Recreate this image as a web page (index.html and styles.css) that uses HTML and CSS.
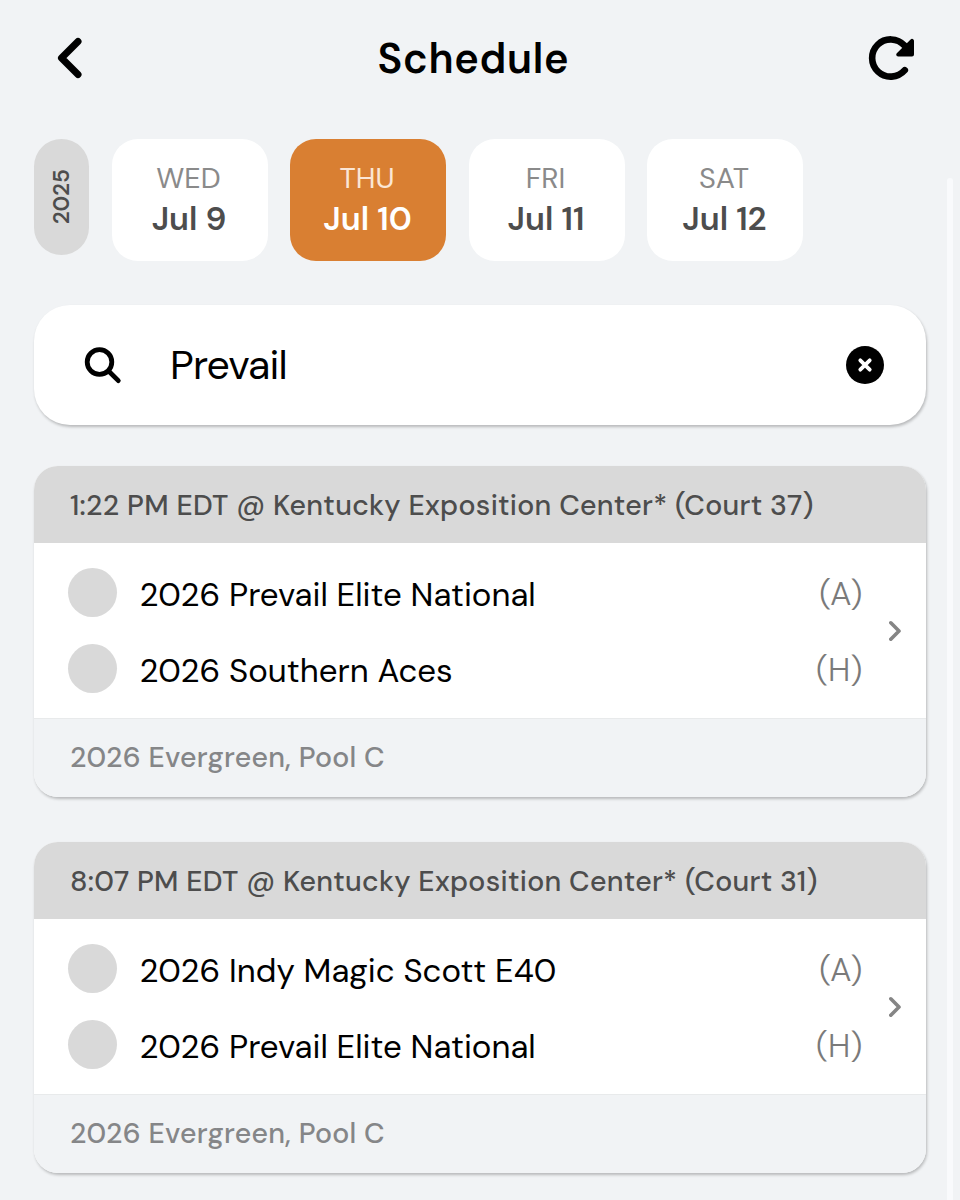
FILE: index.html
```
<!DOCTYPE html>
<html lang="en">
<head>
  <meta charset="UTF-8">
  <meta name="viewport" content="width=device-width, initial-scale=1.0">
  <title>Schedule</title>
  <link rel="stylesheet" href="styles.css">
</head>
<body>

  <header class="topbar">
    <svg class="icon-back" width="28" height="44" viewBox="0 0 28 44">
      <path d="M22 5.5 L5.5 22 L22 38.5"/>
    </svg>
    <h1>Schedule</h1>
    <svg class="icon-refresh" width="48" height="48" viewBox="0 0 48 48">
      <path class="arc" d="M37.8 36.2 A18.6 18.6 0 1 1 37.5 11.5"/>
      <path class="arrow" d="M45 6.8 V20.6 H31.2 Z"/>
    </svg>
  </header>

  <!-- dates -->
  <nav class="dates">
    <div class="year"><span>2025</span></div>
    <div class="day"><span class="weekday">WED</span><span class="date">Jul 9</span></div>
    <div class="day active"><span class="weekday">THU</span><span class="date">Jul 10</span></div>
    <div class="day"><span class="weekday">FRI</span><span class="date">Jul 11</span></div>
    <div class="day"><span class="weekday">SAT</span><span class="date">Jul 12</span></div>
  </nav>

  <!-- search -->
  <div class="search">
    <svg class="icon-search" width="38" height="38" viewBox="0 0 38 38">
      <circle cx="15.5" cy="16" r="12.3"/>
      <path d="M24.8 25.2 L34.3 34.6"/>
    </svg>
    <span class="query">Prevail</span>
    <svg class="icon-clear" width="38" height="38" viewBox="0 0 38 38">
      <circle cx="19" cy="19" r="19"/>
      <path d="M14.3 14.3 L23.7 23.7 M23.7 14.3 L14.3 23.7"/>
    </svg>
  </div>

  <!-- games -->
  <section class="game">
    <div class="game-head">1:22 PM EDT @ Kentucky Exposition Center* (Court 37)</div>
    <div class="game-body">
      <div class="teams">
        <div class="team"><i class="logo"></i><span class="name">2026 Prevail Elite National</span><span class="side">(A)</span></div>
        <div class="team"><i class="logo"></i><span class="name">2026 Southern Aces</span><span class="side">(H)</span></div>
      </div>
      <svg class="icon-next" width="14" height="22" viewBox="0 0 14 22">
        <path d="M1.8 2.8 L10 11 L1.8 19.2"/>
      </svg>
    </div>
    <div class="game-foot">2026 Evergreen, Pool C</div>
  </section>

  <section class="game">
    <div class="game-head">8:07 PM EDT @ Kentucky Exposition Center* (Court 31)</div>
    <div class="game-body">
      <div class="teams">
        <div class="team"><i class="logo"></i><span class="name">2026 Indy Magic Scott E40</span><span class="side">(A)</span></div>
        <div class="team"><i class="logo"></i><span class="name">2026 Prevail Elite National</span><span class="side">(H)</span></div>
      </div>
      <svg class="icon-next" width="14" height="22" viewBox="0 0 14 22">
        <path d="M1.8 2.8 L10 11 L1.8 19.2"/>
      </svg>
    </div>
    <div class="game-foot">2026 Evergreen, Pool C</div>
  </section>

  <div class="scrollbar"></div>

</body>
</html>
```
FILE: styles.css
```
* {
  box-sizing: border-box;
}

body {
  position: relative;
  margin: 0;
  height: 1200px;
  padding: 0 33.6px 0 34px;
  overflow: hidden;
  background-color: #f1f3f5;
  font-family: "DM Sans", Inter, "Liberation Sans", sans-serif;
  color: #000;
  white-space: nowrap;
}

svg {
  display: block;
  flex: none;
  fill: none;
  stroke-linecap: round;
  stroke-linejoin: round;
}

/* top bar */
.topbar {
  display: flex;
  align-items: center;
  justify-content: space-between;
  height: 116px;
  padding: 0 11.5px 0 22px;
}

.topbar h1 {
  margin: 0 4px 0 0;
  padding-top: 2px;
  font-size: 41.5px;
  font-weight: 600;
  letter-spacing: 0.7px;
}

.icon-back {
  stroke: #000;
  stroke-width: 7;
}

.icon-refresh .arc {
  stroke: #000;
  stroke-width: 6.6;
}

.icon-refresh .arrow {
  fill: #000;
  stroke: #000;
  stroke-width: 4;
}

/* dates */
.dates {
  display: flex;
  align-items: flex-start;
  gap: 22.5px;
  padding-top: 22.5px;
  height: 189px;
}

.year {
  display: flex;
  align-items: center;
  justify-content: center;
  width: 55px;
  height: 116px;
  border-radius: 27.5px;
  background-color: #d9d9d9;
}

.year span {
  padding-bottom: 1px;
  writing-mode: vertical-rl;
  transform: rotate(180deg);
  font-size: 22.5px;
  font-weight: 600;
  line-height: 28px;
  color: #4d4d4d;
}

.day {
  display: flex;
  flex-direction: column;
  align-items: center;
  width: 156px;
  height: 122px;
  padding-top: 20px;
  border-radius: 26px;
  background-color: #fff;
}

.weekday {
  margin-right: 2px;
  font-size: 29px;
  line-height: 38px;
  color: #8a8a8a;
}

.date {
  margin-right: 1px;
  font-size: 33px;
  font-weight: 600;
  line-height: 44px;
  color: #4d4d4d;
}

.day.active {
  background-color: #d97f32;
}

.active .weekday {
  color: #fbe6d5;
}

.active .date {
  color: #fff;
}

/* search box */
.search {
  display: flex;
  align-items: center;
  height: 120px;
  margin-bottom: 41px;
  padding: 0 42.4px 0 50px;
  border-radius: 36px;
  background-color: #fff;
  box-shadow: 1px 2px 3px rgba(0, 0, 0, 0.24);
}

.icon-search {
  stroke: #000;
  stroke-width: 4.8;
}

.query {
  flex: 1;
  padding-left: 48px;
  font-size: 41px;
  letter-spacing: -0.8px;
  line-height: 52px;
}

.icon-clear circle {
  fill: #000;
}

.icon-clear path {
  stroke: #fff;
  stroke-width: 3.8;
}

/* game card */
.game {
  height: 331px;
  margin-bottom: 45px;
  border-radius: 24px;
  overflow: hidden;
  background-color: #fff;
  box-shadow: 1px 2px 3px rgba(0, 0, 0, 0.24);
}

.game-head {
  height: 77px;
  padding-left: 36px;
  background-color: #d9d9d9;
  font-size: 28.5px;
  font-weight: 500;
  letter-spacing: 0.27px;
  line-height: 79px;
  color: #4d4d4d;
}

.game-body {
  display: flex;
  align-items: center;
  height: 175px;
  padding: 0 23px 0 33.5px;
}

.teams {
  flex: 1;
  margin-right: 27px;
}

.team {
  display: flex;
  align-items: center;
  height: 76px;
}

.logo {
  width: 49px;
  height: 49px;
  border-radius: 50%;
  background-color: #d9d9d9;
}

.name {
  flex: 1;
  padding: 3px 0 0 23px;
  font-size: 33px;
  letter-spacing: 0.02px;
}

.side {
  padding-top: 2px;
  font-size: 33px;
  font-weight: 300;
  color: #7a7a7a;
}

.icon-next {
  stroke: #858585;
  stroke-width: 3.6;
}

.game-foot {
  height: 79px;
  padding-left: 36px;
  border-top: 1px solid #e8eaeb;
  background-color: #f1f3f5;
  font-size: 28.5px;
  font-weight: 500;
  letter-spacing: 0.24px;
  line-height: 77px;
  color: #858688;
}

/* page scrollbar, runs past the bottom edge */
.scrollbar {
  position: absolute;
  top: 178px;
  right: 7px;
  bottom: -10px;
  width: 6px;
  border-radius: 3px;
  background-color: #f9fafc;
}
```
